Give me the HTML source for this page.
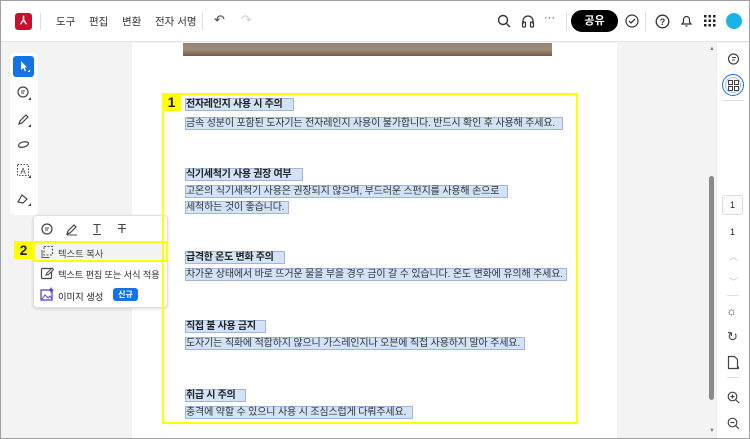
<!DOCTYPE html>
<html><head><meta charset="utf-8"><style>
*{margin:0;padding:0;box-sizing:border-box}
body{width:750px;height:439px;overflow:hidden;position:relative;background:#f3f3f3;font-family:"Liberation Sans","Noto Sans CJK KR",sans-serif;color:#222}
.a{position:absolute}
.hdr{left:0;top:0;width:750px;height:42px;background:#fff;border-bottom:1px solid #e4e4e4}
.nav{top:14px;font-size:10.5px;color:#333}
.sel{position:absolute;background:#d3e3f7;border:1px solid #9fb6d6;height:13px}
.t{position:absolute;font-size:10px;letter-spacing:-0.15px;color:#333;white-space:nowrap;line-height:13px}
.h{font-weight:bold;color:#222;letter-spacing:-0.3px}
</style></head><body>
<div class="a" style="left:0;top:0;width:750px;height:439px;border:1px solid #a0a0a0;z-index:50;pointer-events:none"></div>
<div class="a hdr"></div>
<div class="a" style="left:15px;top:13px;width:17px;height:17px;background:#c8102e;border-radius:3px;color:#fff;font-size:11px;text-align:center;line-height:17px;font-weight:bold">⅄</div>
<div class="a" style="left:40px;top:13px;width:1px;height:17px;background:#ddd"></div>
<div class="a nav" style="left:56px">도구</div>
<div class="a nav" style="left:89px">편집</div>
<div class="a nav" style="left:122px">변환</div>
<div class="a nav" style="left:155px">전자 서명</div>
<div class="a" style="left:202px;top:13px;width:1px;height:17px;background:#ddd"></div>
<div class="a" style="left:214px;top:12px;font-size:13px;color:#444">↶</div>
<div class="a" style="left:241px;top:12px;font-size:13px;color:#ccc">↷</div>
<svg class="a" style="left:497px;top:14px" width="14" height="14"><circle cx="6" cy="6" r="4.5" fill="none" stroke="#333" stroke-width="1.4"/><line x1="9.5" y1="9.5" x2="13" y2="13" stroke="#333" stroke-width="1.4"/></svg>
<svg class="a" style="left:521px;top:14px" width="14" height="14"><path d="M2 10V7a5 5 0 0110 0v3" fill="none" stroke="#333" stroke-width="1.3"/><rect x="1.5" y="8" width="3" height="5" rx="1" fill="none" stroke="#333" stroke-width="1.2"/><rect x="9.5" y="8" width="3" height="5" rx="1" fill="none" stroke="#333" stroke-width="1.2"/></svg>
<div class="a" style="left:544px;top:12px;font-size:11px;color:#333">···</div>
<div class="a" style="left:566px;top:12px;width:1px;height:19px;background:#ddd"></div>
<div class="a" style="left:571px;top:10px;width:47px;height:22px;background:#000;border-radius:11px;color:#fff;font-size:11px;font-weight:bold;text-align:center;line-height:22px">공유</div>
<svg class="a" style="left:625px;top:14px" width="14" height="14"><circle cx="7" cy="7" r="6" fill="none" stroke="#333" stroke-width="1.2"/><path d="M4 7l2 2 4-4" fill="none" stroke="#333" stroke-width="1.3"/></svg>
<div class="a" style="left:645px;top:12px;width:1px;height:19px;background:#ddd"></div>
<svg class="a" style="left:655px;top:14px" width="15" height="15"><circle cx="7.5" cy="7.5" r="6.3" fill="none" stroke="#333" stroke-width="1.3"/><text x="7.5" y="11" font-size="9" text-anchor="middle" font-family="Liberation Sans" font-weight="bold" fill="#333">?</text></svg>
<svg class="a" style="left:680px;top:14px" width="13" height="14"><path d="M2 10h9l-1.5-2V5.5a3 3 0 00-6 0V8z" fill="none" stroke="#333" stroke-width="1.2"/><path d="M5.5 12h2" stroke="#333" stroke-width="1.2"/></svg>
<svg class="a" style="left:704px;top:15px" width="12" height="12" fill="#222"><rect x="0" y="0" width="2.5" height="2.5"/><rect x="4.5" y="0" width="2.5" height="2.5"/><rect x="9" y="0" width="2.5" height="2.5"/><rect x="0" y="4.5" width="2.5" height="2.5"/><rect x="4.5" y="4.5" width="2.5" height="2.5"/><rect x="9" y="4.5" width="2.5" height="2.5"/><rect x="0" y="9" width="2.5" height="2.5"/><rect x="4.5" y="9" width="2.5" height="2.5"/><rect x="9" y="9" width="2.5" height="2.5"/></svg>
<div class="a" style="left:726px;top:13px;width:16px;height:16px;border-radius:50%;background:#1ab3e8"></div>

<div class="a" style="left:132px;top:43px;width:485px;height:396px;background:#fff"></div>
<div class="a" style="left:183px;top:43px;width:369px;height:13px;background:linear-gradient(180deg,#8d8478,#a08d78 50%,#735a43);"></div>

<div class="a" style="left:10px;top:53px;width:28px;height:162px;background:#fff;border-radius:4px"></div>
<div class="a" style="left:13px;top:56px;width:21px;height:21px;background:#1473e6;border-radius:3px"></div>
<svg class="a" style="left:17px;top:59px" width="14" height="14"><path d="M4 2v9l2.3-2 1.6 3.4 1.2-.6-1.6-3.3H10z" fill="#fff"/><path d="M13 13h-2.5l2.5-2.5z" fill="#fff"/></svg>
<svg class="a" style="left:16px;top:85px" width="16" height="16"><circle cx="7" cy="7" r="5" fill="none" stroke="#444" stroke-width="1.2"/><path d="M5 6h4M5 8h3" stroke="#444"/><path d="M15 15h-3l3-3z" fill="#444"/></svg>
<svg class="a" style="left:16px;top:112px" width="16" height="16"><path d="M3 12l1-3 6-6 2 2-6 6z" fill="none" stroke="#444" stroke-width="1.2"/><path d="M15 15h-3l3-3z" fill="#444"/></svg>
<svg class="a" style="left:16px;top:138px" width="16" height="14"><path d="M3 9c-2-3 3-6 8-5 3 1 1 4-3 5-3 .5-5 0-5 0" fill="none" stroke="#444" stroke-width="1.2"/></svg>
<svg class="a" style="left:16px;top:163px" width="16" height="16"><rect x="1.5" y="1.5" width="11" height="11" fill="none" stroke="#444" stroke-dasharray="1.5 1.5"/><text x="7" y="11" font-size="8" text-anchor="middle" fill="#444" font-family="Liberation Sans">A</text><path d="M15 15h-3l3-3z" fill="#444"/></svg>
<svg class="a" style="left:16px;top:191px" width="16" height="16"><path d="M2 11l4-7 5 4-4 4z" fill="none" stroke="#444" stroke-width="1.2"/><path d="M15 15h-3l3-3z" fill="#444"/></svg>

<div class="a" style="left:33px;top:215px;width:135px;height:93px;background:#fff;border:1px solid #e0e0e0;border-radius:4px;box-shadow:0 1px 3px rgba(0,0,0,.15)"></div>
<svg class="a" style="left:40px;top:222px" width="14" height="14"><circle cx="7" cy="7" r="5" fill="none" stroke="#444" stroke-width="1.2"/><path d="M5 6h4M5 8h3" stroke="#444"/></svg>
<svg class="a" style="left:65px;top:222px" width="14" height="14"><path d="M2 12l1-3 6-6 2 2-6 6z" fill="none" stroke="#444" stroke-width="1.2"/><path d="M2 13h10" stroke="#444"/></svg>
<div class="a" style="left:93px;top:221px;font-size:13px;color:#444;text-decoration:underline">T</div>
<div class="a" style="left:118px;top:221px;font-size:13px;color:#444;text-decoration:line-through">T</div>
<div class="a" style="left:33px;top:241px;width:135px;height:21px;border:2px solid #ffff00;background:#f3f3f3"></div>
<div class="a" style="left:14px;top:241px;width:19px;height:18px;background:#ffff00;font-weight:bold;font-size:14px;text-align:center;line-height:18px">2</div>
<svg class="a" style="left:40px;top:245px" width="14" height="14"><rect x="4" y="1.5" width="8.5" height="8.5" fill="none" stroke="#555" stroke-dasharray="2 1.5"/><path d="M2 5v7.5h7.5" fill="none" stroke="#555"/></svg>
<div class="a" style="left:58px;top:246px;font-size:9.3px;color:#444">텍스트 복사</div>
<svg class="a" style="left:40px;top:266px" width="14" height="14"><rect x="1.5" y="2.5" width="10" height="10" rx="1" fill="none" stroke="#444" stroke-width="1.2"/><path d="M6 9l1-2 5-5 1.5 1.5-5 5z" fill="#fff" stroke="#444"/></svg>
<div class="a" style="left:58px;top:267px;font-size:9.3px;letter-spacing:-0.2px;color:#333;white-space:nowrap">텍스트 편집 또는 서식 적용</div>
<svg class="a" style="left:40px;top:287px" width="14" height="14"><rect x="1" y="3" width="11" height="10" fill="none" stroke="#5b3fd6" stroke-width="1.3"/><path d="M2 12l3-4 3 3 2-2 2 3" fill="none" stroke="#5b3fd6"/><path d="M11 0l1 2 2 1-2 1-1 2-1-2-2-1 2-1z" fill="#5b3fd6"/></svg>
<div class="a" style="left:58px;top:289px;font-size:9.3px;color:#222">이미지 생성</div>
<div class="a" style="left:113px;top:288px;width:25px;height:13px;background:#1473e6;border-radius:3px;color:#fff;font-size:8px;font-weight:bold;text-align:center;line-height:13px">신규</div>

<div class="a" style="left:162px;top:93px;width:416px;height:331px;border:2px solid #ffff00"></div>
<div class="a" style="left:162px;top:93px;width:19px;height:18px;background:#ffff00;font-weight:bold;font-size:14px;text-align:center;line-height:18px">1</div>

<div class="sel" style="left:185px;top:98px;width:109px"></div><div class="t h" style="left:186px;top:98px">전자레인지 사용 시 주의</div>
<div class="sel" style="left:185px;top:117px;width:378px"></div><div class="t" style="left:186px;top:117px">금속 성분이 포함된 도자기는 전자레인지 사용이 불가합니다. 반드시 확인 후 사용해 주세요.</div>
<div class="sel" style="left:185px;top:168px;width:118px"></div><div class="t h" style="left:186px;top:168px">식기세척기 사용 권장 여부</div>
<div class="sel" style="left:185px;top:185px;width:323px"></div><div class="t" style="left:186px;top:185px">고온의 식기세척기 사용은 권장되지 않으며, 부드러운 스펀지를 사용해 손으로</div>
<div class="sel" style="left:185px;top:201px;width:104px"></div><div class="t" style="left:186px;top:201px">세척하는 것이 좋습니다.</div>
<div class="sel" style="left:185px;top:251px;width:100px"></div><div class="t h" style="left:186px;top:251px">급격한 온도 변화 주의</div>
<div class="sel" style="left:185px;top:268px;width:382px"></div><div class="t" style="left:186px;top:268px">차가운 상태에서 바로 뜨거운 물을 부을 경우 금이 갈 수 있습니다. 온도 변화에 유의해 주세요.</div>
<div class="sel" style="left:185px;top:320px;width:81px"></div><div class="t h" style="left:186px;top:320px">직접 불 사용 금지</div>
<div class="sel" style="left:185px;top:337px;width:340px"></div><div class="t" style="left:186px;top:337px">도자기는 직화에 적합하지 않으니 가스레인지나 오븐에 직접 사용하지 말아 주세요.</div>
<div class="sel" style="left:185px;top:389px;width:61px"></div><div class="t h" style="left:186px;top:389px">취급 시 주의</div>
<div class="sel" style="left:185px;top:406px;width:228px"></div><div class="t" style="left:186px;top:406px">충격에 약할 수 있으니 사용 시 조심스럽게 다뤄주세요.</div>

<div class="a" style="left:716px;top:43px;width:34px;height:396px;background:#fff;border-left:1px solid #eee"></div>
<div class="a" style="left:709px;top:176px;width:5px;height:224px;background:#8a8a8a;border-radius:3px"></div>
<div class="a" style="left:709px;top:46px;font-size:6px;color:#888">▲</div>
<div class="a" style="left:709px;top:428px;font-size:6px;color:#888">▼</div>
<svg class="a" style="left:726px;top:52px" width="14" height="14"><circle cx="7.5" cy="7" r="5" fill="none" stroke="#444" stroke-width="1.2"/><path d="M6 5.5h4M6 8h3" stroke="#444"/></svg>
<div class="a" style="left:722px;top:74px;width:22px;height:22px;border-radius:50%;border:1.5px solid #1473e6;box-shadow:inset 0 0 0 2px #fff,inset 0 0 0 3px #9cc3f5"></div>
<svg class="a" style="left:728px;top:80px" width="11" height="11"><rect x=".5" y=".5" width="4" height="4" fill="none" stroke="#444"/><rect x="6.5" y=".5" width="4" height="4" fill="none" stroke="#444"/><rect x=".5" y="6.5" width="4" height="4" fill="none" stroke="#444"/><rect x="6.5" y="6.5" width="4" height="4" fill="none" stroke="#444"/></svg>
<div class="a" style="left:723px;top:100px;width:21px;height:1px;background:#ddd"></div>
<div class="a" style="left:722px;top:195px;width:21px;height:20px;border:1px solid #ddd;border-radius:3px;background:#fafafa;font-size:9px;text-align:center;line-height:18px">1</div>
<div class="a" style="left:730px;top:227px;font-size:9px">1</div>
<div class="a" style="left:729px;top:250px;font-size:9px;color:#bbb">︿</div>
<div class="a" style="left:729px;top:275px;font-size:9px;color:#bbb">﹀</div>
<div class="a" style="left:727px;top:295px;width:12px;height:1px;background:#ddd"></div>
<div class="a" style="left:726px;top:304px;font-size:12px;color:#444">☼</div>
<div class="a" style="left:727px;top:329px;font-size:13px;color:#444">↻</div>
<svg class="a" style="left:727px;top:355px" width="13" height="15"><path d="M1.5 1.5h6l3 3v9h-9z" fill="none" stroke="#444" stroke-width="1.2"/><path d="M12 14h-3l3-3z" fill="#444"/></svg>
<div class="a" style="left:727px;top:377px;width:12px;height:1px;background:#ddd"></div>
<svg class="a" style="left:727px;top:391px" width="13" height="13"><circle cx="5.5" cy="5.5" r="4.3" fill="none" stroke="#444" stroke-width="1.2"/><path d="M3.5 5.5h4M5.5 3.5v4M8.5 8.5l3.5 3.5" stroke="#444" stroke-width="1.2"/></svg>
<svg class="a" style="left:727px;top:417px" width="13" height="13"><circle cx="5.5" cy="5.5" r="4.3" fill="none" stroke="#444" stroke-width="1.2"/><path d="M3.5 5.5h4M8.5 8.5l3.5 3.5" stroke="#444" stroke-width="1.2"/></svg>
</body></html>
